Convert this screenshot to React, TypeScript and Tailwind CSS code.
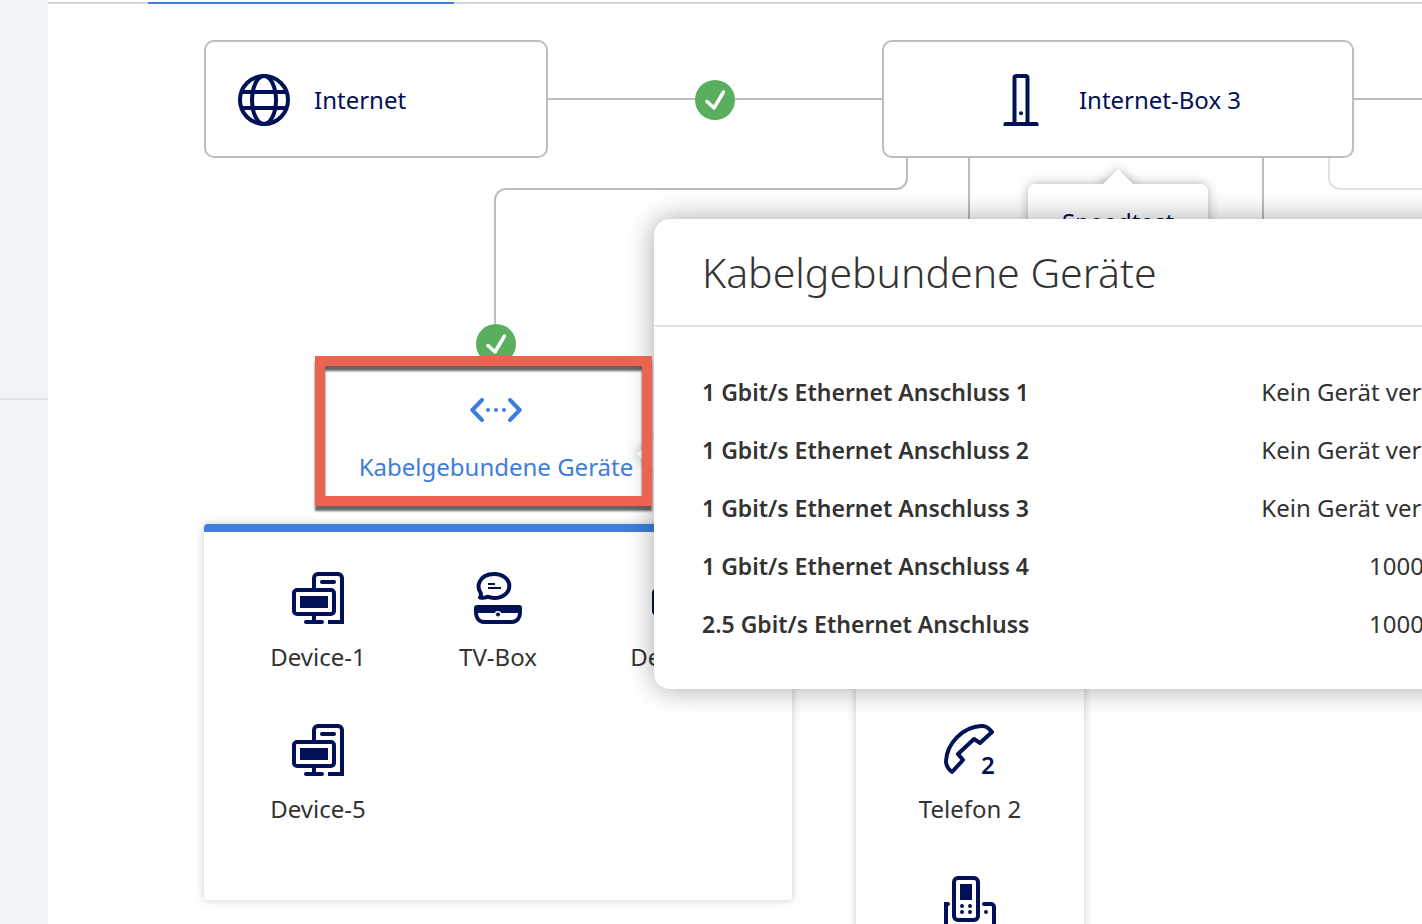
import type { ReactNode } from 'react';
import { cx } from 'class-variance-authority';

type IconProps = { className?: string };

function GlobeIcon({ className }: IconProps) {
    return (
        <svg viewBox="0 0 52 52" className={cx('size-13 shrink-0', className)} fill="none" stroke="currentColor" strokeWidth="4" aria-hidden="true">
            <circle cx="26" cy="26" r="24" />
            <ellipse cx="26" cy="26" rx="12" ry="24" />
            <path d="M4 18h44M4 34h44" />
        </svg>
    );
}

function RouterIcon({ className }: IconProps) {
    return (
        <svg viewBox="0 0 52 52" className={cx('size-13 shrink-0', className)} fill="none" stroke="currentColor" strokeWidth="4" aria-hidden="true">
            <path d="M19.500 50V4a2 2 0 0 1 2-2h9a2 2 0 0 1 2 2v46" />
            <path d="M8.500 52v-2a2 2 0 0 1 2-2h31a2 2 0 0 1 2 2v2z" fill="currentColor" stroke="none" />
            <circle cx="26" cy="39.300" r="2" fill="currentColor" stroke="none" />
        </svg>
    );
}

function EthernetIcon({ className }: IconProps) {
    return (
        <svg viewBox="0 0 52 24" className={cx('h-6 w-13 shrink-0', className)} fill="none" stroke="currentColor" strokeWidth="4" aria-hidden="true">
            <path d="M12 2 2.300 12 12 22M40 2l9.700 10L40 22" strokeLinecap="round" strokeLinejoin="round" />
            <path d="M18 12h0M26 12h0M34 12h0" strokeLinecap="round" />
        </svg>
    );
}

function ComputerIcon({ className }: IconProps) {
    return (
        <svg viewBox="0 0 52 52" className={cx('size-13', className)} fill="none" stroke="currentColor" strokeWidth="4" aria-hidden="true">
            <path d="M22 17V6a4 4 0 0 1 4-4h20a4 4 0 0 1 4 4v44H36" />
            <path d="M30 10h12M14 50h16" strokeLinecap="round" />
            <rect x="2" y="18" width="40" height="24" rx="3" />
            <path d="M22 43v6" />
            <rect x="8" y="24" width="28" height="12" fill="currentColor" stroke="none" />
        </svg>
    );
}

function TvBoxIcon({ className }: IconProps) {
    return (
        <svg viewBox="0 0 52 52" className={cx('size-13', className)} fill="none" stroke="currentColor" strokeWidth="4" aria-hidden="true">
            <path
                d="M8.500 20.500C6.500 17.500 6.200 13 7.500 10 10 4.500 16 2 22.300 2 31 2 37.300 7.500 37.300 14S31 26 22.300 26c-2.500 0-5-.5-7-1.300-2.500 1.300-5 1.300-7.300.8 1.200-1.500 1.200-3 .5-5z"
                strokeLinejoin="round"
            />
            <path d="M16 12h7M16 16h13" strokeWidth="2" />
            <path d="M2 38v-2a3 3 0 0 1 3-3h42a3 3 0 0 1 3 3v4c0 7-4 12-10 12H12C6 52 2 47 2 40zM6 41c0 4 2.500 7 6 7h28c3.500 0 6-3 6-7z" fill="currentColor" stroke="none" fillRule="evenodd" />
            <circle cx="26" cy="42.500" r="3.500" fill="white" stroke="none" />
            <circle cx="26" cy="42.500" r="2" fill="currentColor" stroke="none" />
        </svg>
    );
}

function PhoneIcon({ line, className }: IconProps & { line?: number }) {
    return (
        <svg viewBox="0 0 52 52" className={cx('size-13', className)} aria-hidden="true">
            <path
                d="M37 2c4.500-.3 7 1 11 6L36 19l-6-4-16 15 5 6L8 48c-4-3-6-6.500-6-11C3 19 19 3 37 2z"
                fill="none"
                stroke="currentColor"
                strokeWidth="4"
                strokeLinejoin="round"
            />
            {line && (
                <text x="37" y="50" className="fill-current text-2xl font-semibold">
                    {line}
                </text>
            )}
        </svg>
    );
}

function HandsetIcon({ className }: IconProps) {
    return (
        <svg viewBox="0 0 52 52" className={cx('size-13', className)} fill="none" stroke="currentColor" strokeWidth="4" aria-hidden="true">
            <rect x="10" y="2" width="24" height="42" rx="4" />
            <rect x="16" y="8" width="12" height="16" fill="currentColor" stroke="none" />
            <path d="M18 30h0M26 30h0M18 36h0M26 36h0M42 36h0" strokeLinecap="round" />
            <path d="M4 28H2v22h48V31a3 3 0 0 0-3-3h-7" strokeLinecap="round" />
        </svg>
    );
}

function StatusBadge({ className }: IconProps) {
    return (
        <span role="img" aria-label="OK" className={cx('flex size-10 shrink-0 items-center justify-center rounded-full bg-[#59af5d] text-white', className)}>
            <svg viewBox="0 0 20 20" className="size-5" fill="none" stroke="currentColor" strokeWidth="3.500" strokeLinecap="round" strokeLinejoin="round">
                <path d="M2 11.500l7 6.500L18.500 2" />
            </svg>
        </span>
    );
}

function Line({ className }: IconProps) {
    return <span className={cx('h-0.5 flex-1 bg-[#bdbdbd]', className)} />;
}

type Device = { label: string; icon: ReactNode };

const wiredDevices: Device[] = [
    { label: 'Device-1', icon: <ComputerIcon /> },
    { label: 'TV-Box', icon: <TvBoxIcon /> },
    { label: 'Device-3', icon: <ComputerIcon /> },
    { label: 'Device-5', icon: <ComputerIcon /> },
];

const phones: Device[] = [
    { label: 'Telefon', icon: <PhoneIcon /> },
    { label: 'Telefon 2', icon: <PhoneIcon line={2} /> },
    { label: 'Telefon 3', icon: <HandsetIcon /> },
];

const ports = [
    { name: '1 Gbit/s Ethernet Anschluss 1', value: 'Kein Gerät verbunden' },
    { name: '1 Gbit/s Ethernet Anschluss 2', value: 'Kein Gerät verbunden' },
    { name: '1 Gbit/s Ethernet Anschluss 3', value: 'Kein Gerät verbunden' },
    { name: '1 Gbit/s Ethernet Anschluss 4', value: '1000 MBit /s' },
    { name: '2.5 Gbit/s Ethernet Anschluss', value: '1000 MBit /s' },
];

function DeviceList({ devices, className }: { devices: Device[]; className?: string }) {
    return (
        <ul className={cx('grid gap-y-8 rounded border-t-8 px-6 pt-10 shadow-[0_0_8px_rgba(0,0,0,0.22)]', className)}>
            {devices.map((device) => (
                <li key={device.label} className="flex h-30 flex-col items-center gap-4 text-[#001155]">
                    {device.icon}
                    <span className="leading-[34px] text-[#333333]">{device.label}</span>
                </li>
            ))}
        </ul>
    );
}

function PortPopover() {
    return (
        <section className="absolute top-[219px] left-[606px] z-20 w-[903px]">
            {/* Arrow towards the wired node */}
            <span className="absolute top-[223px] -left-3 size-6 rotate-45 bg-white shadow-[0_0_12px_rgba(0,0,0,0.3)]" />
            <div className="relative z-20 rounded-2xl bg-white text-[#333333] shadow-[0_0_28px_rgba(0,0,0,0.35)]">
                <h2 className="border-b-2 border-[#dde3e7] px-12 py-6 text-[41px] leading-[58px] font-light">Kabelgebundene Geräte</h2>
                <div className="px-12 py-9">
                    <table className="w-full">
                        <tbody>
                            {ports.map((port) => (
                                <tr key={port.name} className="h-[58px]">
                                    <th scope="row" className="text-left text-[23px] font-semibold">
                                        {port.name}
                                    </th>
                                    <td className="text-right">{port.value}</td>
                                </tr>
                            ))}
                        </tbody>
                    </table>
                </div>
            </div>
            {/* Highlight frame around the wired node */}
            <span className="pointer-events-none absolute top-[137px] -left-[339px] z-30 h-[150px] w-[337px] border-10 border-[#ec6352] drop-shadow-[0_5px_1px_rgba(0,0,0,0.6)]" />
        </section>
    );
}

export default function App() {
    return (
        <div className="flex h-screen overflow-hidden bg-white font-['Noto_Sans',sans-serif] text-2xl text-[#001155]">
            <aside className="w-12 shrink-0 bg-[#eef3f6]">
                <div className="h-[400px] border-b-2 border-[#dde2e6]" />
            </aside>

            <main className="relative min-w-0 flex-1">
                {/* Tab underline */}
                <div className="flex h-1 items-end border-b-2 border-[#d6d6d6]">
                    <span className="-mb-0.5 ml-25 h-0.5 w-[306px] bg-[#3d7ede]" />
                </div>

                <div className="w-[1600px] pt-9 pl-39">
                    <div className="flex items-center">
                        <div className="flex h-[118px] w-[344px] items-center gap-6 rounded-[10px] border-2 border-[#bdbdbd] px-8 pt-0.5">
                            <GlobeIcon />
                            <span>Internet</span>
                        </div>
                        <div className="flex w-[334px] items-center">
                            <Line />
                            <StatusBadge className="mt-0.5" />
                            <Line />
                        </div>
                        <div className="flex h-[118px] w-[472px] items-center justify-center gap-8 rounded-[10px] border-2 border-[#bdbdbd] pt-0.5">
                            <RouterIcon />
                            <span>Internet-Box 3</span>
                        </div>
                        <Line />
                    </div>

                    {/* Links from the router down to its device groups */}
                    <div className="relative h-[166px]">
                        <span className="absolute top-0 left-[400px] h-8 w-[304px] rounded-br-xl border-r-2 border-b-2 border-[#bdbdbd]" />
                        <span className="absolute top-[30px] left-[290px] h-34 w-[110px] rounded-tl-xl border-t-2 border-l-2 border-[#bdbdbd]" />
                        <span className="absolute top-0 left-[764px] h-full w-0.5 bg-[#bdbdbd]" />
                        <span className="absolute top-0 left-[1058px] h-full w-0.5 bg-[#bdbdbd]" />
                        <span className="absolute top-0 left-[1124px] h-8 w-[200px] rounded-bl-xl border-b-2 border-l-2 border-[#dde3e7]" />
                        <div className="absolute top-[26px] left-[824px] w-45 rounded-lg bg-white shadow-[0_0_12px_rgba(0,0,0,0.3)]">
                            <span className="absolute -top-2.5 left-[78px] size-6 rotate-45 bg-white shadow-[0_0_12px_rgba(0,0,0,0.3)]" />
                            <button type="button" className="relative w-full rounded-lg bg-white pt-5 pb-5 text-center leading-9">
                                Speedtest
                            </button>
                        </div>
                    </div>

                    <div className="flex gap-16">
                        <div className="w-[588px]">
                            <div className="flex h-50 flex-col items-center pr-1 text-[#3d7ede]">
                                <StatusBadge />
                                <EthernetIcon className="mt-[34px]" />
                                <a href="#wired" className="mt-7 leading-[34px]">
                                    Kabelgebundene Geräte
                                </a>
                            </div>
                            <DeviceList devices={wiredDevices} className="h-94 grid-cols-3 content-start border-[#3d7ede]" />
                        </div>
                        <div className="w-57 pt-50">
                            <DeviceList devices={phones} className="border-white pb-8" />
                        </div>
                    </div>
                </div>

                <PortPopover />
            </main>
        </div>
    );
}
